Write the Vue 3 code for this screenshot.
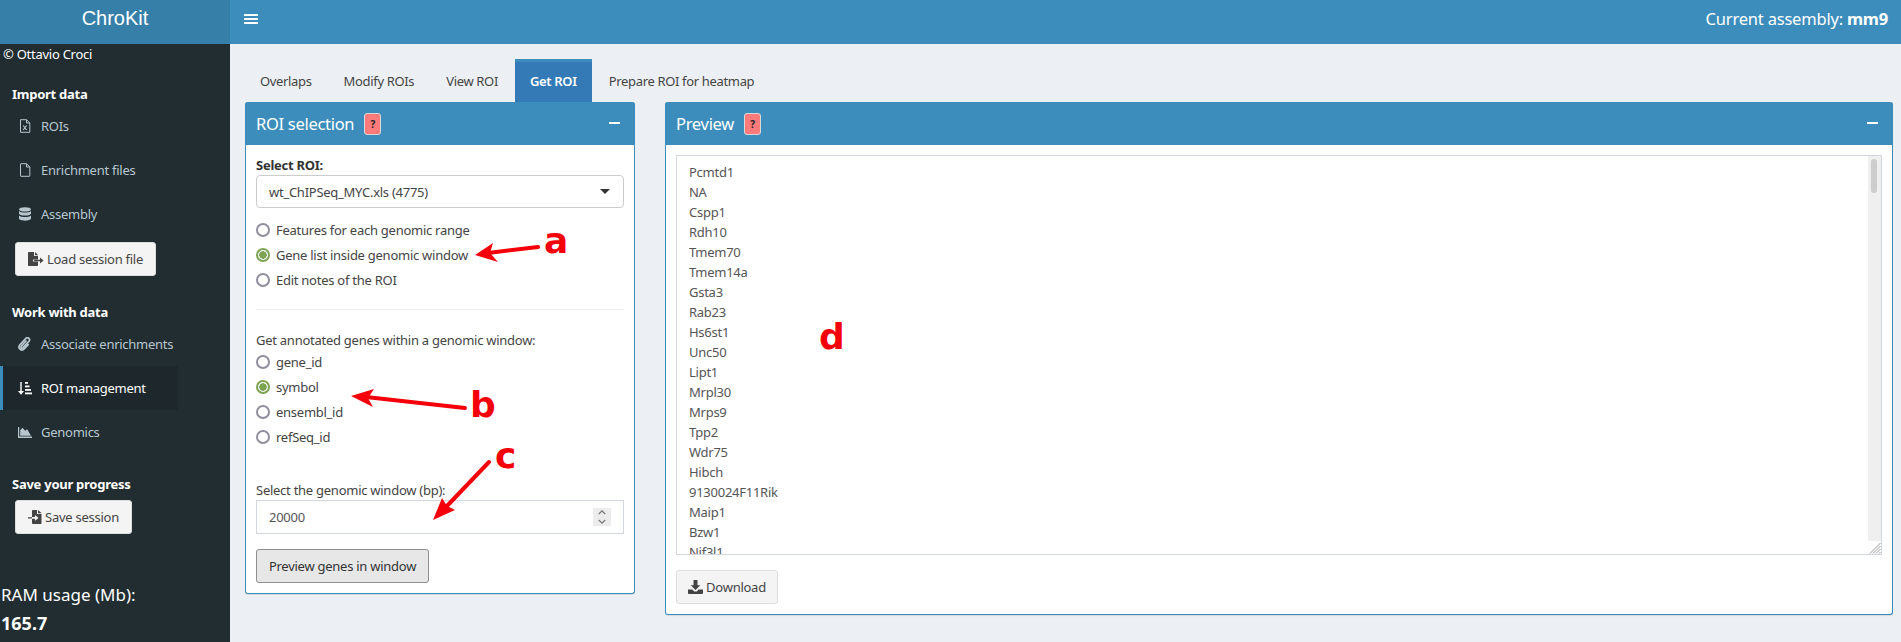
<template>
  <div class="app">
    <header class="topbar">
      <div class="logo">ChroKit</div>
      <div class="topbar-main">
        <svg class="burger" width="14" height="12" viewBox="0 0 14 12" fill="#fff">
          <rect y="1" width="14" height="2" rx="0.6" />
          <rect y="5" width="14" height="2" rx="0.6" />
          <rect y="9" width="14" height="2" rx="0.6" />
        </svg>
        <div class="assembly">Current assembly: <b>mm9</b></div>
      </div>
    </header>

    <div class="body-row">
      <aside class="sidebar">
        <div class="copyright">© Ottavio Croci</div>

        <div class="side-title first">Import data</div>
        <a class="nav-item">
          <svg class="nav-icon" width="14" height="14" viewBox="-1.500 0 14 14" fill="none" stroke="#b8c7ce">
            <path d="M1 .7h6l3.300 3.300v9.300H1zM7 .7V4h3.300" />
            <path d="M3.700 6.500l3.400 4.500M7.100 6.500l-3.400 4.500" stroke-width="1.200" />
          </svg>
          ROIs
        </a>
        <a class="nav-item">
          <svg class="nav-icon" width="14" height="14" viewBox="-1.500 0 14 14" fill="none" stroke="#b8c7ce">
            <path d="M1 1.200Q1 .7 1.500 .7H7l3.300 3.300v8.800q0 .5-.5.5H1.500q-.5 0-.5-.5zM7 .7V4h3.300" />
          </svg>
          Enrichment files
        </a>
        <a class="nav-item">
          <svg class="nav-icon" width="14" height="14" viewBox="-1 0 14 14" fill="#b8c7ce">
            <ellipse cx="6" cy="2.400" rx="6" ry="2.200" />
            <path d="M0 4v2.400c0 1.200 2.700 2.100 6 2.100s6-.9 6-2.100V4c-1.200 1-3.500 1.500-6 1.500S1.200 5 0 4z" />
            <path d="M0 8.400v3.200c0 1.200 2.700 2.100 6 2.100s6-.9 6-2.100V8.400c-1.200 1-3.500 1.500-6 1.500s-4.800-.5-6-1.500z" />
          </svg>
          Assembly
        </a>
        <button class="side-btn load">
          <svg width="16" height="14" viewBox="0 0 16 14">
            <path fill="#444" d="M0 .8Q0 0 .8 0H6v4h4v3.600H5v1.800h5v3.800q0 .8-.8.8H.8q-.8 0-.8-.8z" />
            <path fill="#444" d="M7 0l3 3v.2H7z" />
            <path fill="#444" d="M6 7.800h6V5.600l3.600 2.900L12 11.400V9.200H6z" />
          </svg>
          Load session file
        </button>

        <div class="side-title second">Work with data</div>
        <a class="nav-item">
          <svg class="nav-icon" width="14" height="14" viewBox="0 0 14 14" fill="none" stroke="#b8c7ce" stroke-width="1.700">
            <path d="M8.500 3.500L3.300 9.200c-1 1.200 .5 2.600 1.600 1.500l6-6.400c1.900-2.100-1-4.900-3-2.900L1.900 7.800c-2.700 3 1.500 7 4.300 4.100l4.500-4.800" />
          </svg>
          Associate enrichments
        </a>
        <a class="nav-item active">
          <svg class="nav-icon" width="14" height="13" viewBox="0 0 14 13" fill="#fff">
            <path d="M2.300 0h1.400v9H6l-3 3.700L0 9h2.300z" />
            <rect x="7" y="0" width="3" height="1.800" />
            <rect x="7" y="3.500" width="4.500" height="1.800" />
            <rect x="7" y="7" width="6" height="1.800" />
            <rect x="7" y="10.500" width="7" height="1.800" />
          </svg>
          ROI management
        </a>
        <a class="nav-item">
          <svg class="nav-icon" width="14" height="11" viewBox="0 0 14 11" fill="#b8c7ce">
            <path d="M0 0h1.200v9.600H14V11H0z" />
            <path d="M2.200 8.800V3.200L4.400 .8l2.800 3 2-1.600 3.800 6.600z" />
          </svg>
          Genomics
        </a>

        <div class="side-title third">Save your progress</div>
        <button class="side-btn save">
          <svg width="14" height="14" viewBox="0 0 14 14">
            <path fill="#444" d="M4 .8Q4 0 4.800 0H9v4h4.500v9.200q0 .8-.8.8H4.800q-.8 0-.8-.8V8.800h3v2l3.600-2.900-3.600-2.900v2H4z" />
            <path fill="#444" d="M10 0l3.500 3v.2H10zM0 7.200h4v1.400H0z" />
          </svg>
          Save session
        </button>

        <div class="ram">RAM usage (Mb):</div>
        <div class="ram-value">165.7</div>
      </aside>

      <main class="content">
        <nav class="tabs">
          <a v-for="tab in tabs" :key="tab" class="tab" :class="{ current: tab === 'Get ROI' }">{{ tab }}</a>
        </nav>

        <div class="columns">
          <section class="panel">
            <div class="panel-head">
              <span class="panel-title">ROI selection</span>
              <span class="help">?</span>
              <span class="minus"></span>
            </div>
            <div class="panel-body">
              <label class="strong-label">Select ROI:</label>
              <div class="select">
                <span>wt_ChIPSeq_MYC.xls (4775)</span>
                <i class="caret"></i>
              </div>

              <div class="radios first-radios">
                <div v-for="opt in viewOptions" :key="opt" class="radio-row">
                  <span class="radio" :class="{ on: opt === 'Gene list inside genomic window' }"></span>{{ opt }}
                </div>
              </div>

              <hr class="divider" />

              <div class="plain-label">Get annotated genes within a genomic window:</div>
              <div class="radios id-radios">
                <div v-for="opt in idOptions" :key="opt" class="radio-row">
                  <span class="radio" :class="{ on: opt === 'symbol' }"></span>{{ opt }}
                </div>
              </div>

              <div class="plain-label window-label">Select the genomic window (bp):</div>
              <div class="number-input">
                <span>20000</span>
                <span class="spinner">
                  <svg width="8" height="16" viewBox="0 0 8 16" fill="none" stroke="#777" stroke-width="1.200">
                    <path d="M.8 5l3.200-3.200L7.200 5M.8 11l3.200 3.200L7.200 11" />
                  </svg>
                </span>
              </div>
              <button class="preview-btn">Preview genes in window</button>
            </div>
          </section>

          <section class="panel">
            <div class="panel-head">
              <span class="panel-title">Preview</span>
              <span class="help">?</span>
              <span class="minus right"></span>
            </div>
            <div class="panel-body">
              <div class="gene-box">
                <div class="gene-list">
                  <div v-for="gene in genes" :key="gene" class="gene">{{ gene }}</div>
                </div>
                <div class="scroll-track"><div class="scroll-thumb"></div></div>
                <svg class="resizer" width="12" height="12" viewBox="0 0 12 12" stroke="#999" stroke-width="1">
                  <path d="M1 11.500L11.500 1M4 11.500L11.500 4M7 11.500L11.500 7M10 11.500l1.500-1.500" />
                </svg>
              </div>
              <button class="download-btn">
                <svg width="15" height="14" viewBox="0 0 15 14" fill="#444">
                  <path d="M5.500 0h4v5.200h2.800L7.500 10 2.700 5.200h2.800z" />
                  <path d="M0 9.500h4.300l2 2h2.400l2-2H15v3.700q0 .8-.8.8H.8q-.8 0-.8-.8z" />
                </svg>
                Download
              </button>
            </div>
          </section>
        </div>
      </main>
    </div>

    <!-- red annotations drawn over the screenshot -->
    <svg class="notes" width="1901" height="642" viewBox="0 0 1901 642">
      <g v-for="note in notes" :key="note.label">
        <template v-if="note.tail">
          <line :x1="note.tail[0]" :y1="note.tail[1]" :x2="note.neck[0]" :y2="note.neck[1]" />
          <polygon :points="note.head" />
        </template>
        <text :x="note.at[0]" :y="note.at[1]">{{ note.label }}</text>
      </g>
    </svg>
  </div>
</template>

<script setup>
const tabs = ["Overlaps", "Modify ROIs", "View ROI", "Get ROI", "Prepare ROI for heatmap"];

const viewOptions = [
  "Features for each genomic range",
  "Gene list inside genomic window",
  "Edit notes of the ROI",
];

const idOptions = ["gene_id", "symbol", "ensembl_id", "refSeq_id"];

const genes = [
  "Pcmtd1", "NA", "Cspp1", "Rdh10", "Tmem70", "Tmem14a", "Gsta3", "Rab23", "Hs6st1", "Unc50",
  "Lipt1", "Mrpl30", "Mrps9", "Tpp2", "Wdr75", "Hibch", "9130024F11Rik", "Maip1", "Bzw1", "Nif3l1",
];

const notes = [
  { label: "a", at: [544, 253], tail: [538, 247], neck: [488, 253], head: "475,255 493,243 490,253 498,262" },
  { label: "b", at: [470, 417], tail: [465, 408], neck: [366, 397], head: "351,396 374,389 368,398 373,407" },
  { label: "c", at: [495, 468], tail: [489, 462], neck: [446, 507], head: "433,520 442,498 447,506 455,510" },
  { label: "d", at: [819, 349] },
];
</script>

<style>
html,
body {
  overflow: hidden;
}
</style>

<style scoped>
.app {
  position: relative;
  width: 1901px;
  height: 642px;
  overflow: hidden;
  background: #ecf0f5;
  font-family: "Noto Sans", sans-serif;
  font-size: 13px;
  letter-spacing: -0.26px;
  line-height: 20px;
  color: #333;
}
.topbar {
  display: flex;
  height: 44px;
  color: #fff;
}
.logo {
  width: 230px;
  background: #367fa9;
  text-align: center;
  font-family: "Liberation Sans", sans-serif;
  font-size: 20px;
  letter-spacing: 0;
  line-height: 36px;
}
.topbar-main {
  flex: 1;
  display: flex;
  align-items: center;
  justify-content: space-between;
  background: #3c8dbc;
  padding: 0 13px 6px 14px;
}
.assembly {
  font-size: 16.5px;
  letter-spacing: -0.2px;
}
.body-row {
  display: flex;
  height: 598px;
}
.sidebar {
  width: 230px;
  flex: none;
  background: #222d32;
  color: #fff;
}
.copyright {
  padding-left: 3px;
}
.side-title {
  padding-left: 12px;
  font-weight: 700;
}
.side-title.first {
  margin-top: 20px;
}
.side-title.second {
  margin-top: 26px;
}
.side-title.third {
  margin-top: 20px;
}
.nav-item {
  display: flex;
  align-items: center;
  height: 44px;
  width: 178px;
  border-left: 3px solid transparent;
  padding-left: 15px;
  box-sizing: border-box;
  white-space: nowrap;
  color: #b8c7ce;
}
.nav-item.active {
  border-left-color: #3c8dbc;
  background: #1e282c;
  color: #fff;
}
.nav-icon {
  flex: none;
  margin-right: 9px;
}
.side-btn {
  display: flex;
  align-items: center;
  justify-content: center;
  gap: 3px;
  height: 34px;
  margin: 6px 0 0 15px;
  padding: 0;
  background: #f4f4f4;
  border: 1px solid #ddd;
  border-radius: 3px;
  font: inherit;
  letter-spacing: inherit;
  color: #444;
}
.side-btn.load {
  width: 141px;
}
.side-btn.save {
  width: 117px;
}
.ram {
  margin-top: 48px;
  padding-left: 1px;
  font-size: 17px;
  letter-spacing: 0;
  line-height: 26px;
}
.ram-value {
  margin-top: 2px;
  padding-left: 1px;
  font-size: 18px;
  letter-spacing: 0;
  font-weight: 700;
  line-height: 26px;
}
.content {
  flex: 1;
  min-width: 0;
  padding: 15px 8px 0 15px;
}
.tabs {
  display: flex;
  gap: 2px;
  height: 43px;
}
.tab {
  box-sizing: border-box;
  height: 43px;
  padding: 9px 15px 0;
  border-top: 3px solid transparent;
  letter-spacing: -0.34px;
  color: #444;
}
.tab.current {
  background: #337ab7;
  border-top-color: #3c8dbc;
  color: #fff;
  font-weight: 600;
}
.columns {
  display: grid;
  grid-template-columns: 390px 1fr;
  gap: 30px;
  align-items: start;
}
.panel {
  background: #fff;
  border: 1px solid #3c8dbc;
  border-top: 0;
  border-radius: 3px;
  box-shadow: 0 1px 1px rgba(0, 0, 0, 0.1);
}
.panel-head {
  position: relative;
  display: flex;
  align-items: center;
  height: 43px;
  margin: 0 -1px;
  padding: 0 11px;
  background: #3c8dbc;
  border-radius: 3px 3px 0 0;
  color: #fff;
}
.panel-title {
  font-size: 16.5px;
  letter-spacing: -0.3px;
}
.help {
  display: flex;
  align-items: center;
  justify-content: center;
  box-sizing: border-box;
  width: 17px;
  height: 22px;
  margin-left: 10px;
  background: #ff7b7b;
  border: 1px solid #d9d9d9;
  border-radius: 3px;
  font-size: 10px;
  font-weight: 700;
  color: #222;
}
.minus {
  position: absolute;
  top: 20px;
  right: 15px;
  width: 11px;
  height: 2px;
  background: #fff;
}
.panel-body {
  padding: 10px;
}
.strong-label {
  display: block;
  font-weight: 700;
}
.select {
  display: flex;
  align-items: center;
  justify-content: space-between;
  box-sizing: border-box;
  height: 33px;
  padding: 0 12px;
  border: 1px solid #ccc;
  border-radius: 4px;
  color: #444;
}
.caret {
  width: 0;
  height: 0;
  margin-right: 1px;
  border-left: 5px solid transparent;
  border-right: 5px solid transparent;
  border-top: 5px solid #333;
}
.first-radios {
  margin-top: 9px;
}
.id-radios {
  margin-top: -1px;
}
.radio-row {
  display: flex;
  align-items: center;
  gap: 6px;
  height: 25px;
  color: #444;
}
.radio {
  box-sizing: border-box;
  flex: none;
  width: 14px;
  height: 14px;
  border: 2px solid #8f8f9d;
  border-radius: 50%;
  background: #fff;
}
.radio.on {
  border-color: #7da453;
  background: radial-gradient(circle, #7da453 0 3.500px, #fff 4px);
}
.divider {
  margin: 17px 0 20px;
  border: 0;
  border-top: 1px solid #eee;
}
.plain-label {
  color: #444;
}
.window-label {
  margin-top: 31px;
}
.number-input {
  display: flex;
  align-items: center;
  justify-content: space-between;
  box-sizing: border-box;
  height: 34px;
  padding: 0 12px;
  border: 1px solid #d2d6de;
  color: #555;
}
.spinner {
  display: flex;
  align-items: center;
  justify-content: center;
  width: 18px;
  height: 18px;
  background: #ececec;
}
.preview-btn {
  display: block;
  box-sizing: border-box;
  width: 173px;
  height: 34px;
  margin-top: 15px;
  padding: 0;
  background: #e7e7e7;
  border: 1px solid #8e8e8e;
  border-radius: 3px;
  font: inherit;
  letter-spacing: inherit;
  color: #333;
}
.gene-box {
  position: relative;
  box-sizing: border-box;
  height: 400px;
  padding: 6px 12px 0;
  overflow: hidden;
  border: 1px solid #d2d6de;
  color: #555;
}
.gene-list {
  height: 392px;
  overflow: hidden;
}
.scroll-track {
  position: absolute;
  top: 0;
  right: 0;
  bottom: 13px;
  width: 13px;
  padding-top: 3px;
  box-sizing: border-box;
  background: #efefef;
}
.scroll-thumb {
  width: 6px;
  height: 34px;
  margin-left: 3px;
  background: #cdcdcd;
  border-radius: 3px;
}
.resizer {
  position: absolute;
  right: 0;
  bottom: 0;
  background: #fff;
}
.download-btn {
  display: flex;
  align-items: center;
  justify-content: center;
  gap: 3px;
  box-sizing: border-box;
  width: 102px;
  height: 34px;
  margin-top: 15px;
  padding: 0;
  background: #f4f4f4;
  border: 1px solid #ddd;
  border-radius: 3px;
  font: inherit;
  letter-spacing: inherit;
  color: #444;
}
.notes {
  position: absolute;
  top: 0;
  left: 0;
  pointer-events: none;
}
.notes line {
  stroke: #f5000a;
  stroke-width: 4;
  stroke-linecap: round;
}
.notes polygon {
  fill: #f5000a;
}
.notes text {
  fill: #f5000a;
  font-family: "DejaVu Sans", sans-serif;
  font-size: 36px;
  letter-spacing: 0;
  font-weight: 700;
}
</style>
